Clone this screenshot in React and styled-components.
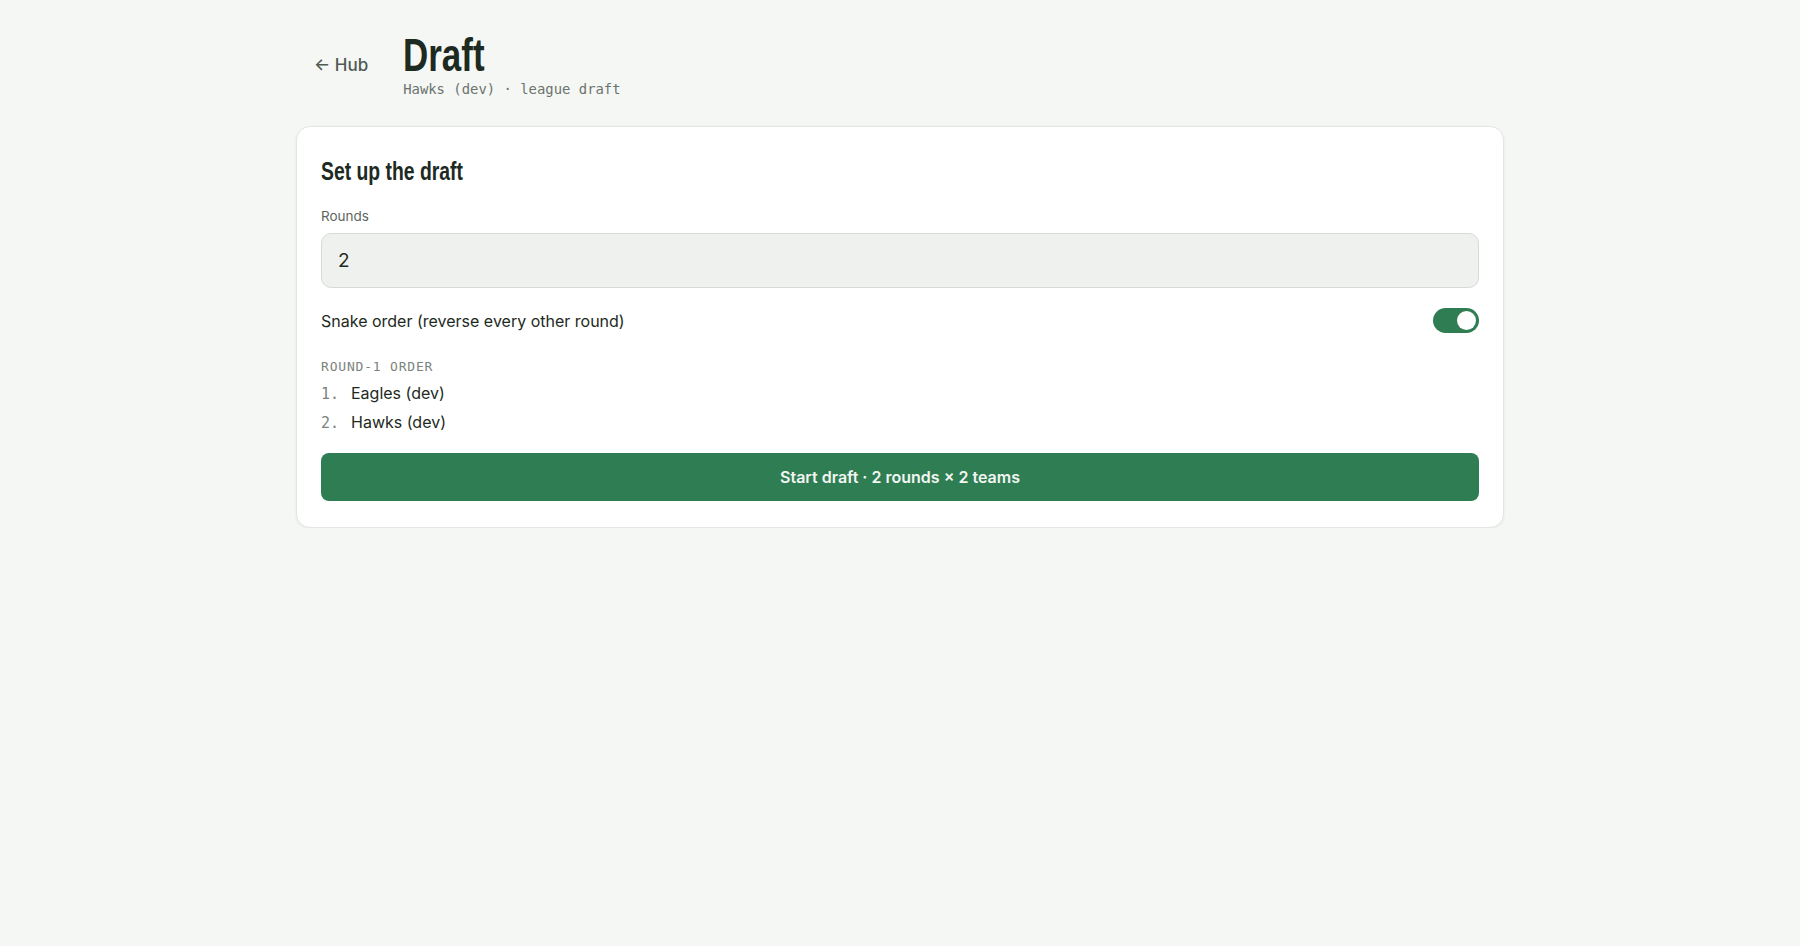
import { useState } from "react";
import styled, { createGlobalStyle } from "styled-components";

const GlobalStyle = createGlobalStyle`
  body {
    margin: 0;
    background: #f5f7f4;
    font-family: "Inter", "Noto Sans", sans-serif;
    color: #1d2a22;
  }
`;

const TEAMS = ["Eagles (dev)", "Hawks (dev)"];

function App() {
  const [rounds, setRounds] = useState("2");
  const [snake, setSnake] = useState(true);

  return (
    <Page>
      <GlobalStyle />
      <Header>
        <BackLink href="#">← Hub</BackLink>
        <TitleBlock>
          <Title>Draft</Title>
          <Subtitle>Hawks (dev) · league draft</Subtitle>
        </TitleBlock>
      </Header>

      <Card>
        <CardTitle>Set up the draft</CardTitle>

        <Field>
          <Label>Rounds</Label>
          <Input value={rounds} onChange={(e) => setRounds(e.target.value)} />
        </Field>

        <SwitchRow>
          <span>Snake order (reverse every other round)</span>
          <Toggle $on={snake} onClick={() => setSnake(!snake)}>
            <Knob />
          </Toggle>
        </SwitchRow>

        <OrderBlock>
          <OrderLabel>Round-1 order</OrderLabel>
          {TEAMS.map((team, idx) => (
            <OrderItem key={team}>
              <OrderNum>{idx + 1}.</OrderNum>
              {team}
            </OrderItem>
          ))}
        </OrderBlock>

        <StartButton>
          Start draft · {rounds} rounds × {TEAMS.length} teams
        </StartButton>
      </Card>
    </Page>
  );
}

export default App;

const Page = styled.div`
  max-width: 1208px;
  margin: 0 auto;
  padding-top: 32px;
`;

const Header = styled.header`
  display: flex;
  align-items: center;
  gap: 35px;
  padding-left: 18px;
  margin-bottom: 28px;
`;

const BackLink = styled.a`
  font-size: 17px;
  line-height: 20px;
  font-weight: 500;
  color: #4f5a53;
  text-decoration: none;
`;

const TitleBlock = styled.div`
  display: flex;
  flex-direction: column;
`;

const Title = styled.h1`
  margin: 0;
  font-family: "Liberation Sans", "Noto Sans", sans-serif;
  font-weight: 700;
  font-size: 46px;
  line-height: 46px;
  color: #1d2a22;
  transform: scaleX(0.76);
  transform-origin: left center;
`;

const Subtitle = styled.div`
  font-family: "DejaVu Sans Mono", "Liberation Mono", monospace;
  font-size: 13.9px;
  line-height: 18px;
  color: #6b736d;
  margin-top: 2px;
`;

const Card = styled.section`
  background: #ffffff;
  border: 1px solid #e3e6e1;
  border-radius: 14px;
  box-shadow: 0 1px 3px rgba(20, 40, 30, 0.06);
  padding: 28px 24px 26px;
  display: flex;
  flex-direction: column;
`;

const CardTitle = styled.h2`
  margin: 0 0 21px;
  font-family: "Liberation Sans", "Noto Sans", sans-serif;
  font-weight: 700;
  font-size: 26.5px;
  line-height: 32px;
  color: #1d2a22;
  transform: scaleX(0.73);
  transform-origin: left center;
`;

const Field = styled.div`
  display: flex;
  flex-direction: column;
  gap: 9px;
`;

const Label = styled.label`
  font-size: 13.5px;
  line-height: 16px;
  color: #5d6660;
`;

const Input = styled.input`
  box-sizing: border-box;
  height: 55px;
  width: 100%;
  padding: 0 16px;
  font-family: inherit;
  font-size: 19px;
  color: #1d2a22;
  background: #eff1ee;
  border: 1px solid #d7dbd5;
  border-radius: 10px;
  outline: none;
`;

const SwitchRow = styled.div`
  display: flex;
  align-items: center;
  justify-content: space-between;
  margin-top: 20px;
  font-size: 16px;
  color: #1d2a22;
`;

const Toggle = styled.button`
  box-sizing: border-box;
  width: 46px;
  height: 25px;
  padding: 3px;
  border: none;
  border-radius: 999px;
  background: ${(p) => (p.$on ? "#2f7d52" : "#c9cfca")};
  display: flex;
  justify-content: ${(p) => (p.$on ? "flex-end" : "flex-start")};
  align-items: center;
  cursor: pointer;
`;

const Knob = styled.span`
  width: 19px;
  height: 19px;
  border-radius: 50%;
  background: #ffffff;
`;

const OrderBlock = styled.div`
  display: flex;
  flex-direction: column;
  margin-top: 26px;
`;

const OrderLabel = styled.div`
  font-family: "DejaVu Sans Mono", "Liberation Mono", monospace;
  font-size: 13px;
  line-height: 16px;
  text-transform: uppercase;
  letter-spacing: 0.8px;
  color: #7b837d;
  margin-bottom: 4px;
`;

const OrderItem = styled.div`
  display: flex;
  align-items: baseline;
  font-size: 16px;
  line-height: 28px;
  color: #1d2a22;
`;

const OrderNum = styled.span`
  font-family: "DejaVu Sans Mono", "Liberation Mono", monospace;
  font-size: 15px;
  color: #7b837d;
  width: 30px;
`;

const StartButton = styled.button`
  margin-top: 16px;
  height: 48px;
  border: none;
  border-radius: 8px;
  background: #2f7d52;
  color: #f1f6f2;
  font-family: inherit;
  font-size: 16px;
  font-weight: 600;
  cursor: pointer;
`;
